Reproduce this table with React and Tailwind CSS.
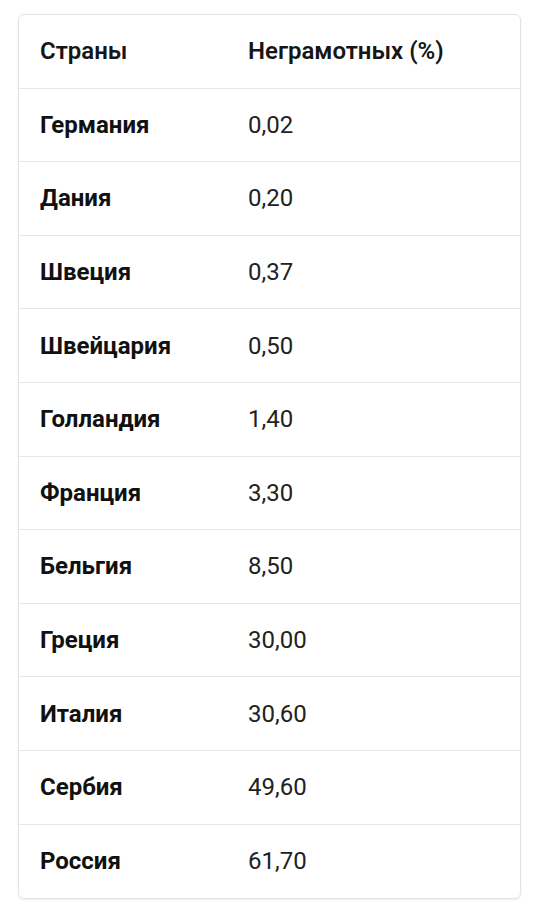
const rows = [
  ["Германия", "0,02"],
  ["Дания", "0,20"],
  ["Швеция", "0,37"],
  ["Швейцария", "0,50"],
  ["Голландия", "1,40"],
  ["Франция", "3,30"],
  ["Бельгия", "8,50"],
  ["Греция", "30,00"],
  ["Италия", "30,60"],
  ["Сербия", "49,60"],
  ["Россия", "61,70"],
];

export default function App() {
  return (
    <div className="w-[540px] h-[920px] bg-white pt-[14px] pl-[18px]" style={{ fontFamily: "Roboto, 'Noto Sans', sans-serif" }}>
      <div className="w-[503px] border border-[#e3e3e3] rounded-[6px] shadow-[0_1px_2px_rgba(0,0,0,0.08)] overflow-hidden">
        <div className="flex items-center h-[73.6px] border-b border-[#e8e8e8] text-[24px] font-semibold text-[#161616]">
          <div className="w-[229px] pl-[21px]">Страны</div>
          <div>Неграмотных (%)</div>
        </div>
        {rows.map(([c, v], i) => (
          <div key={c} className={`flex items-center h-[73.6px] text-[24px] text-[#111] ${i < rows.length - 1 ? "border-b border-[#e8e8e8]" : ""}`}>
            <div className="w-[229px] pl-[21px] font-bold">{c}</div>
            <div className="text-[#222]">{v}</div>
          </div>
        ))}
      </div>
    </div>
  );
}
